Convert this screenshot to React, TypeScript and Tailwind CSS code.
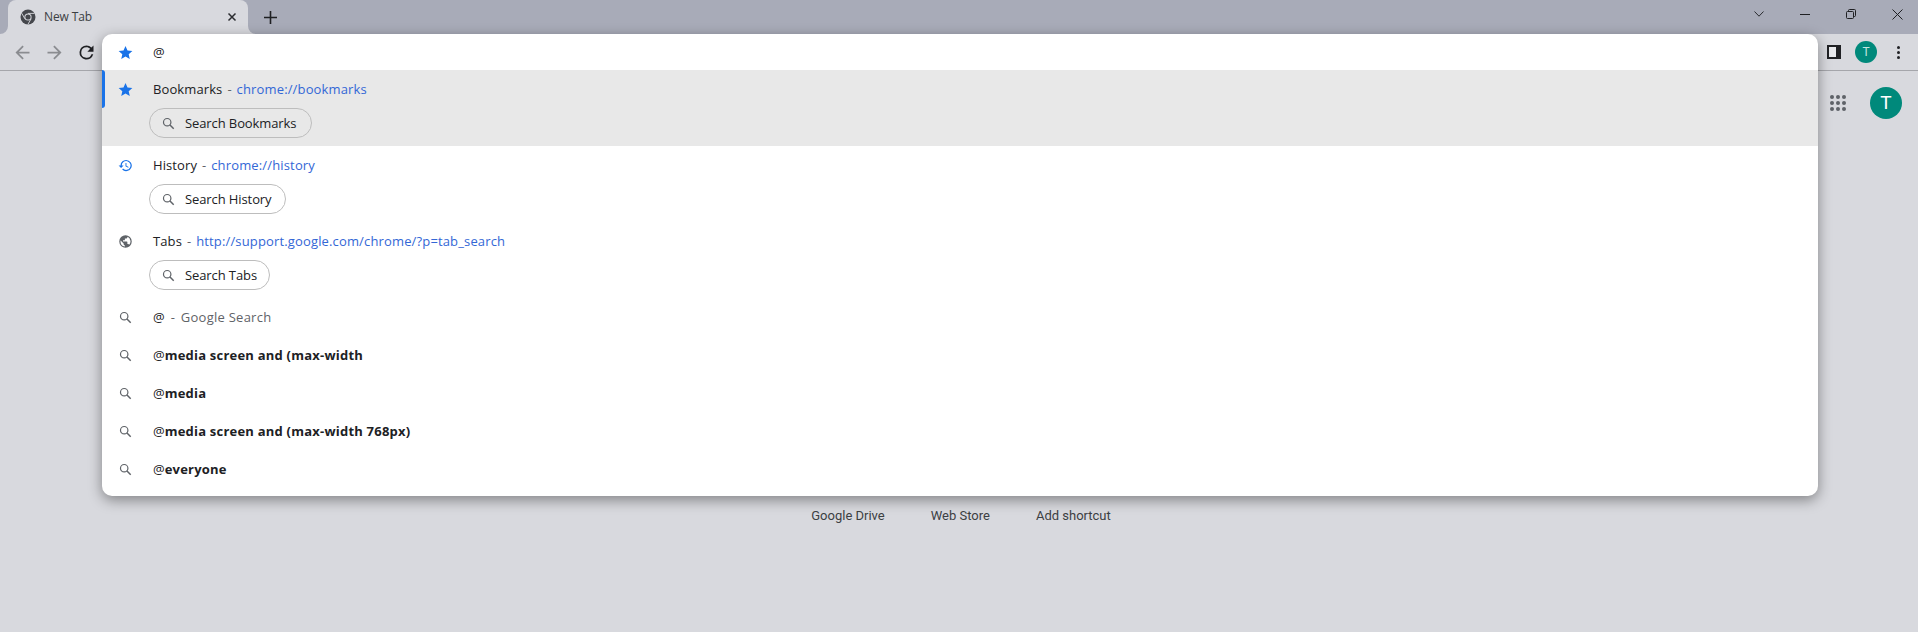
import React from "react";

const FONT = "font-['Open_Sans','Noto_Sans',sans-serif]";

function SearchIcon({ size = 14, color = "#5f6368" }: { size?: number; color?: string }) {
  return (
    <svg width={size} height={size} viewBox="0 0 14 14" fill="none" stroke={color} strokeWidth="1.3">
      <circle cx="5.6" cy="5.6" r="4" />
      <path d="M8.6 8.6 12.6 12.6" strokeWidth="1.6" />
    </svg>
  );
}

function Star({ size = 15 }: { size?: number }) {
  return (
    <svg width={size} height={size} viewBox="0 0 24 24" fill="#1a73e8">
      <path d="M12 1.5l3.2 7.2 7.8.8-5.9 5.2 1.7 7.7L12 18.4l-6.8 4 1.7-7.7L1 9.5l7.8-.8z" />
    </svg>
  );
}

function IconCell({ children }: { children: React.ReactNode }) {
  return <div className="mr-[5px] flex w-[46px] shrink-0 justify-center">{children}</div>;
}

function Chip({ label, w }: { label: string; w: string }) {
  return (
    <div className={`${w} ml-[47px] flex h-[30px] items-center rounded-full border border-[#bdbdbd] pl-[12px] text-[13px] text-[#202124]`}>
      <SearchIcon size={13} />
      <span className="ml-[10px] pt-[1px] tracking-[-0.1px]">{label}</span>
    </div>
  );
}

function NavRow({ icon, title, url, chip, w, selected }: { icon: React.ReactNode; title: string; url: string; chip: string; w: string; selected?: boolean }) {
  return (
    <div className={`relative h-[76px] ${selected ? "bg-[#e8e8e8]" : ""}`}>
      {selected && <div className="absolute left-0 top-0 h-[38px] w-[3px] rounded-r-[3px] bg-[#1a73e8]" />}
      <div className="flex h-[38px] items-center text-[13px]">
        <IconCell>{icon}</IconCell>
        <span className="pt-[2px] tracking-[0.1px] text-[#202124]">{title}</span>
        <span className="mx-[5px] pt-[2px] text-[#5f6368]">-</span>
        <span className="pt-[2px] tracking-[0.15px] text-[#3367d6]">{url}</span>
      </div>
      <Chip label={chip} w={w} />
    </div>
  );
}

function SearchRow({ children }: { children: React.ReactNode }) {
  return (
    <div className="flex h-[38px] items-center text-[13px]">
      <IconCell><SearchIcon size={13} /></IconCell>
      <div className="flex pt-[2px]">{children}</div>
    </div>
  );
}

function ChromeLogo() {
  return (
    <svg width="16" height="16" viewBox="0 0 16 16">
      <circle cx="8" cy="8" r="7.5" fill="#45474c" />
      <circle cx="8" cy="8" r="3.6" fill="#d8d9de" />
      <circle cx="8" cy="8" r="2.6" fill="#45474c" />
      <path d="M8 4.4h6.4M4.9 9.8 1.7 4.2M11.1 9.8 7.9 15.4" stroke="#d8d9de" strokeWidth="0.9" fill="none" />
    </svg>
  );
}

export default function App() {
  return (
    <div className={`relative h-[632px] w-[1918px] overflow-hidden bg-[#d8d9de] ${FONT}`}>
      {/* Tab strip */}
      <div className="flex h-[34px] items-stretch justify-between bg-[#a8abb8]">
        <div className="flex items-stretch">
          <div className="relative ml-[8px] flex w-[240px] items-center rounded-t-[8px] bg-[#d8d9de] pl-[12px] pr-[11px]">
            <svg className="absolute bottom-0 left-[-8px]" width="8" height="8" viewBox="0 0 8 8"><path d="M8 0V8H0A8 8 0 0 0 8 0Z" fill="#d8d9de" /></svg>
            <svg className="absolute bottom-0 right-[-8px]" width="8" height="8" viewBox="0 0 8 8"><path d="M0 0V8H8A8 8 0 0 1 0 0Z" fill="#d8d9de" /></svg>
            <ChromeLogo />
            <span className="ml-[8px] flex-1 text-[12px] tracking-[-0.1px] text-[#3c4043]">New Tab</span>
            <svg width="10" height="10" viewBox="0 0 10 10" stroke="#2b2c30" strokeWidth="1.5"><path d="M1.5 1.5 8.5 8.5M8.5 1.5 1.5 8.5" /></svg>
          </div>
          <div className="ml-[16px] flex items-center">
            <svg width="13" height="13" viewBox="0 0 13 13" stroke="#1f2023" strokeWidth="1.6"><path d="M6.5 0V13M0 6.5H13" /></svg>
          </div>
        </div>
        <div className="mr-[-2px] flex h-[28px] items-center">
          {[
            <svg key="c" width="10" height="6" viewBox="0 0 10 6" fill="none" stroke="#2b2c30"><path d="M.5.5 5 5.2 9.5.5" /></svg>,
            <svg key="m" width="10" height="1" viewBox="0 0 10 1"><path d="M0 .5H10" stroke="#1f2023" /></svg>,
            <svg key="r" width="10" height="10" viewBox="0 0 10 10" fill="none" stroke="#1f2023"><rect x=".5" y="2.5" width="7" height="7" rx="1" /><path d="M2.5 2.5V1.5a1 1 0 0 1 1-1h5a1 1 0 0 1 1 1v5a1 1 0 0 1-1 1h-1" /></svg>,
            <svg key="x" width="11" height="11" viewBox="0 0 11 11" stroke="#1f2023"><path d="M.5.5 10.5 10.5M10.5.5.5 10.5" /></svg>,
          ].map((icon, i) => (
            <div key={i} className="flex w-[46px] items-center justify-center">{icon}</div>
          ))}
        </div>
      </div>

      {/* Toolbar */}
      <div className="flex h-[37px] items-center justify-between border-b border-[#a5a6ab] pl-[12px] pr-[18px]">
        <div className="flex items-center gap-[11px]">
          <svg width="21" height="21" viewBox="0 0 24 24" fill="#8a8c90"><path d="M20 11H7.83l5.59-5.59L12 4l-8 8 8 8 1.41-1.41L7.83 13H20z" /></svg>
          <svg width="21" height="21" viewBox="0 0 24 24" fill="#8a8c90"><path d="M4 11h12.17l-5.59-5.59L12 4l8 8-8 8-1.41-1.41L16.17 13H4z" /></svg>
          <svg width="21" height="21" viewBox="0 0 24 24" fill="#202124"><path d="M17.65 6.35A7.96 7.96 0 0 0 12 4a8 8 0 1 0 7.73 10h-2.08A6 6 0 1 1 12 6c1.66 0 3.14.69 4.22 1.78L13 11h7V4z" /></svg>
        </div>
        <div className="flex items-center">
          <div className="flex h-[14px] w-[14px] border-[2px] border-[#202124] bg-[#202124]"><div className="w-[7px] bg-[#e8e9ec]" /></div>
          <div className="ml-[14px] flex h-[22px] w-[22px] items-center justify-center rounded-full bg-[#00897b] font-['Roboto',sans-serif] text-[12px] text-[#c5e6e1]">T</div>
          <div className="ml-[20px] flex w-[3px] flex-col gap-[2px]">
            <div className="h-[3px] w-[3px] rounded-full bg-[#202124]" />
            <div className="h-[3px] w-[3px] rounded-full bg-[#202124]" />
            <div className="h-[3px] w-[3px] rounded-full bg-[#202124]" />
          </div>
        </div>
      </div>

      {/* New tab page */}
      <div className="flex h-[64px] items-center justify-end pr-[16px]">
        <div className="grid grid-cols-3 gap-[2px]">
          {Array.from({ length: 9 }).map((_, i) => (
            <div key={i} className="h-[4px] w-[4px] rounded-full bg-[#5f6368]" />
          ))}
        </div>
        <div className="ml-[24px] flex h-[32px] w-[32px] items-center justify-center rounded-full bg-[#00897b] font-['Roboto',sans-serif] text-[19px] text-white">T</div>
      </div>
      <div className="mt-[371px] flex justify-center gap-[46px] pl-[4px] font-['Roboto',sans-serif] text-[13px] text-[#3c4043]">
        <span>Google Drive</span>
        <span>Web Store</span>
        <span>Add shortcut</span>
      </div>

      {/* Omnibox dropdown */}
      <div className="absolute left-[102px] top-[34px] w-[1716px] overflow-hidden rounded-[10px] bg-white pb-[8px] shadow-[0_4px_14px_rgba(0,0,0,0.4)]">
        <div className="flex h-[36px] items-center">
          <IconCell><Star /></IconCell>
          <span className="pt-[1px] text-[13px] text-[#202124]">@</span>
        </div>
        <NavRow selected icon={<Star />} title="Bookmarks" url="chrome://bookmarks" chip="Search Bookmarks" w="w-[163px]" />
        <NavRow
          icon={<svg width="15" height="15" viewBox="0 0 24 24" fill="#1a73e8"><path d="M13 3a9 9 0 0 0-9 9H1l3.89 3.89.07.14L9 12H6a7 7 0 1 1 2.05 4.95l-1.42 1.42A9 9 0 1 0 13 3zm-1 5v5l4.28 2.54.72-1.21-3.5-2.08V8z" /></svg>}
          title="History" url="chrome://history" chip="Search History" w="w-[137px]" />
        <NavRow
          icon={<svg width="15" height="15" viewBox="0 0 24 24" fill="#5f6368"><path d="M12 2a10 10 0 1 0 0 20 10 10 0 0 0 0-20zm-1 17.93A8 8 0 0 1 4 12c0-.62.08-1.21.21-1.79L9 15v1c0 1.1.9 2 2 2zm6.9-2.54A2 2 0 0 0 16 16h-1v-3a1 1 0 0 0-1-1H8v-2h2a1 1 0 0 0 1-1V7h2a2 2 0 0 0 2-2v-.41a8 8 0 0 1 2.9 12.8z" /></svg>}
          title="Tabs" url="http://support.google.com/chrome/?p=tab_search" chip="Search Tabs" w="w-[121px]" />
        <SearchRow>
          <span className="text-[#202124]">@</span>
          <span className="mx-[6px] text-[#5f6368]">-</span>
          <span className="tracking-[0.25px] text-[#5f6368]">Google Search</span>
        </SearchRow>
        {["media screen and (max-width", "media", "media screen and (max-width 768px)", "everyone"].map((t) => (
          <SearchRow key={t}>
            <span className="text-[#202124]">@</span>
            <span className="font-bold tracking-[0.22px] text-[#202124]">{t}</span>
          </SearchRow>
        ))}
      </div>
    </div>
  );
}
